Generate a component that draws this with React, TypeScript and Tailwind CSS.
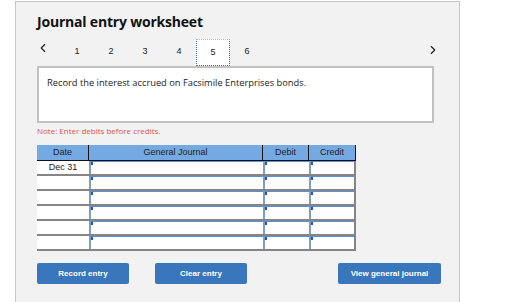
import { ChevronLeft, ChevronRight } from 'lucide-react'

const steps = [1, 2, 3, 4, 5, 6]
const rows = ['Dec 31', '', '', '', '', '']

function InputCell({ w }: { w: string }) {
  return (
    <div className={`relative h-full ${w} border-l-2 border-[#7f9cc4] border-t border-t-[#5b8fd8] bg-white`}>
      <span className="absolute left-0 top-0 w-[2px] h-[3px] bg-[#1f56b0]" />
    </div>
  )
}

export default function App() {
  return (
    <div className="min-h-screen bg-white pt-px pl-[15px] overflow-hidden">
      <div
        className="w-[445px] h-[320px] border border-[#c6c6c6] bg-[#f2f2f2] pl-[21px]"
        style={{ fontFamily: '"Liberation Sans", Arial, sans-serif' }}
      >
        {/* Title */}
        <h1
          className="pt-[10px] text-[14px] leading-[19px] font-bold text-[#111] tracking-[-0.2px]"
          style={{ fontFamily: '"Open Sans", "DejaVu Sans", sans-serif' }}
        >
          Journal entry worksheet
        </h1>

        {/* Step nav */}
        <div className="flex items-center h-[27px] mt-[8px] w-[397px] relative">
          <ChevronLeft className="absolute left-[-1px] top-[2px] w-[14px] h-[14px] text-[#222]" strokeWidth={2} />
          <div className="flex ml-[23px] h-full">
            {steps.map((s) => (
              <div
                key={s}
                className={`w-[34px] h-full flex items-start pt-[6px] justify-center text-[9px] text-[#222] ${
                  s === 5
                    ? 'bg-white border-t border-[#bbb] border-x border-b border-x-[#4a6fa8] border-b-[#4a6fa8] border-dotted relative z-10 h-[28px]'
                    : ''
                }`}
              >
                {s}
              </div>
            ))}
          </div>
          <ChevronRight className="absolute right-[-6px] top-[4px] w-[14px] h-[14px] text-[#222]" strokeWidth={2} />
        </div>

        {/* Prompt */}
        <div className="w-[397px] h-[57px] border-2 border-[#c2c2c2] bg-white pl-[8px] pt-[9px]">
          <p
            className="text-[9.3px] leading-[12px] text-[#222]"
            style={{ fontFamily: '"Open Sans", sans-serif' }}
          >
            Record the interest accrued on Facsimile Enterprises bonds.
          </p>
        </div>

        <p
          className="mt-[3px] text-[8px] leading-[10px] text-[#d9534f]"
          style={{ fontFamily: '"Open Sans", sans-serif' }}
        >
          Note: Enter debits before credits.
        </p>

        {/* Journal table */}
        <div className="mt-[9px] w-[319px] text-[9px] text-[#222]">
          <div className="flex h-[16px] bg-[#74a9e1] border-b border-[#111] border-r border-r-[#111]">
            <div className="w-[52px] flex items-center justify-center border-r border-[#111]">Date</div>
            <div className="w-[174px] flex items-center justify-center border-r border-[#111]">General Journal</div>
            <div className="w-[46px] flex items-center justify-center border-r border-[#111]">Debit</div>
            <div className="flex-1 flex items-center justify-center">Credit</div>
          </div>
          {rows.map((d, i) => (
            <div key={i} className="flex h-[15px] border-b-2 border-[#858585] border-r-2 border-r-[#858585]">
              <div className="w-[52px] h-full bg-white flex items-center justify-center">{d}</div>
              <InputCell w="w-[174px]" />
              <InputCell w="w-[46px]" />
              <InputCell w="flex-1" />
            </div>
          ))}
        </div>

        {/* Actions */}
        <div className="flex mt-[12px] w-[404px] text-[8px] font-bold text-white">
          <button className="w-[92px] h-[21px] rounded-[2px] bg-[#3a76bb]">Record entry</button>
          <button className="ml-[26px] w-[92px] h-[21px] rounded-[2px] bg-[#3a76bb]">Clear entry</button>
          <button className="ml-auto w-[103px] h-[21px] rounded-[2px] bg-[#3a76bb]">View general journal</button>
        </div>
      </div>
    </div>
  )
}
